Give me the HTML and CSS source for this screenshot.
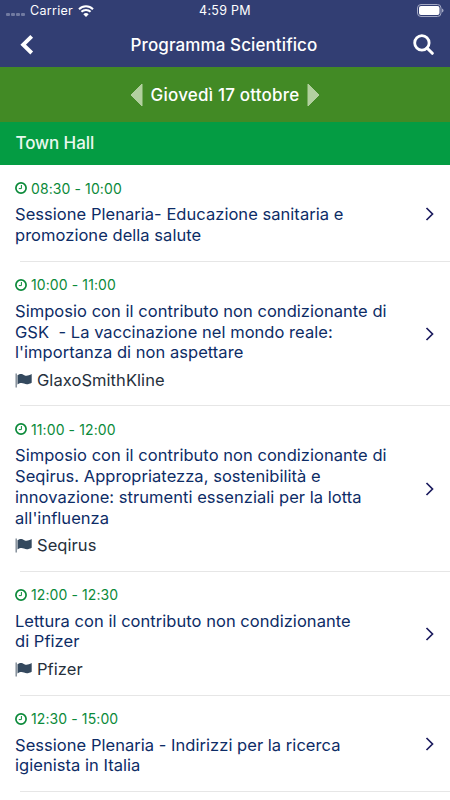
FILE: index.html
```html
<!DOCTYPE html>
<html lang="it">
  <head>
    <meta charset="UTF-8" />
    <meta name="viewport" content="width=device-width, initial-scale=1.0" />
    <title>Programma Scientifico</title>
    <link rel="stylesheet" href="styles.css">
  </head>
  <body>
    <!-- Shared icons -->
    <svg class="icon-defs" width="0" height="0">
      <symbol id="clock" viewBox="0 0 12 12">
        <circle cx="6" cy="6" r="5.1" fill="none" stroke="currentColor" stroke-width="1.7" />
        <path d="M6.400 3v3.600H3.800" fill="none" stroke="currentColor" stroke-width="1" />
      </symbol>
      <symbol id="flag" viewBox="0 0 17 15">
        <path d="M1.200.4v14.200" stroke="#7d8894" stroke-width="1.400" />
        <path d="M2.500 2.200C5.500.3 7 1 9.300 2.200c2.200 1.100 4.300.4 7.400-1.100v8.700c-3 1.600-5.300 2-7.700.8-2.200-1.100-4-.8-6.500.8z" fill="#34495e" />
      </symbol>
      <symbol id="chevron" viewBox="0 0 10 14">
        <path d="M1.500 1l6 6-6 6" fill="none" stroke="currentColor" stroke-width="1.700" />
      </symbol>
    </svg>

    <header class="header">
      <div class="status-bar">
        <div class="status-left">
          <span class="signal"><i></i><i></i><i></i><i></i></span>
          <span class="carrier">Carrier</span>
          <svg class="wifi" width="16" height="12" viewBox="0 0 16 12">
            <path d="M1 4.200a10 10 0 0 1 14 0M3.400 6.800a6.600 6.600 0 0 1 9.200 0" fill="none" stroke="#fff" stroke-width="2" />
            <path d="M8 12L5.300 9.200a3.900 3.900 0 0 1 5.400 0z" fill="#fff" />
          </svg>
        </div>
        <span class="clock">4:59 PM</span>
        <svg class="battery" width="27" height="13" viewBox="0 0 27 13">
          <rect x=".5" y=".5" width="23.500" height="12" rx="3.500" fill="none" stroke="#a4a9c4" />
          <rect x="2" y="2" width="20.500" height="9" rx="2" fill="#fff" />
          <path d="M25 4.500q1.500.5 1.500 2t-1.500 2z" fill="#a4a9c4" />
        </svg>
      </div>
      <div class="nav-bar">
        <svg class="back" width="14" height="20" viewBox="0 0 14 20">
          <path d="M11.700 1.400L3.200 9.700l8.500 8.300" fill="none" stroke="#fff" stroke-width="3.900" />
        </svg>
        <h1 class="nav-title">Programma Scientifico</h1>
        <svg class="search" width="21" height="21" viewBox="0 0 21 21">
          <circle cx="8.900" cy="8.900" r="7.200" fill="none" stroke="#fff" stroke-width="2.800" />
          <path d="M14 14l5.300 5.300" stroke="#fff" stroke-width="3" stroke-linecap="round" />
        </svg>
      </div>
    </header>

    <div class="day-bar">
      <svg width="13" height="24" viewBox="0 0 13 24"><path d="M12 1v22L1 12z" fill="#b2d09f" stroke="#b2d09f" stroke-linejoin="round" /></svg>
      <span class="day">Giovedì 17 ottobre</span>
      <svg width="13" height="24" viewBox="0 0 13 24"><path d="M1 1v22l11-11z" fill="#b2d09f" stroke="#b2d09f" stroke-linejoin="round" /></svg>
    </div>

    <h2 class="room">Town Hall</h2>

    <ul class="sessions">
      <li class="session">
        <div class="info">
          <div class="time"><svg><use href="#clock" /></svg>08:30 - 10:00</div>
          <div class="title">Sessione Plenaria- Educazione sanitaria e<br>promozione della salute</div>
        </div>
        <svg class="chevron"><use href="#chevron" /></svg>
      </li>
      <li class="session">
        <div class="info">
          <div class="time"><svg><use href="#clock" /></svg>10:00 - 11:00</div>
          <div class="title">Simposio con il contributo non condizionante di<br>GSK&nbsp; - La vaccinazione nel mondo reale:<br>l'importanza di non aspettare</div>
          <div class="sponsor"><svg><use href="#flag" /></svg>GlaxoSmithKline</div>
        </div>
        <svg class="chevron"><use href="#chevron" /></svg>
      </li>
      <li class="session">
        <div class="info">
          <div class="time"><svg><use href="#clock" /></svg>11:00 - 12:00</div>
          <div class="title">Simposio con il contributo non condizionante di<br>Seqirus. Appropriatezza, sostenibilità e<br>innovazione: strumenti essenziali per la lotta<br>all'influenza</div>
          <div class="sponsor"><svg><use href="#flag" /></svg>Seqirus</div>
        </div>
        <svg class="chevron"><use href="#chevron" /></svg>
      </li>
      <li class="session">
        <div class="info">
          <div class="time"><svg><use href="#clock" /></svg>12:00 - 12:30</div>
          <div class="title">Lettura con il contributo non condizionante<br>di Pfizer</div>
          <div class="sponsor"><svg><use href="#flag" /></svg>Pfizer</div>
        </div>
        <svg class="chevron"><use href="#chevron" /></svg>
      </li>
      <li class="session">
        <div class="info">
          <div class="time"><svg><use href="#clock" /></svg>12:30 - 15:00</div>
          <div class="title">Sessione Plenaria - Indirizzi per la ricerca<br>igienista in Italia</div>
        </div>
        <svg class="chevron"><use href="#chevron" /></svg>
      </li>
    </ul>
  </body>
</html>
```
FILE: styles.css
```css
* {
  box-sizing: border-box;
}

body {
  margin: 0;
  height: 800px;
  overflow: hidden;
  background-color: #fff;
  font-family: Inter, "Liberation Sans", sans-serif;
  color: #0d2c66;
}

.icon-defs {
  display: block;
}

/* Header */
.header {
  height: 67px;
  background-color: #323e73;
  color: #fff;
}

.status-bar {
  display: grid;
  grid-template-columns: 1fr auto 1fr;
  align-items: center;
  height: 21px;
  padding: 0 6px 0 6px;
  font-size: 12.5px;
  letter-spacing: 0.3px;
}

.status-left {
  display: flex;
  align-items: center;
}

.signal {
  display: flex;
  gap: 1px;
  margin: 7px 5px 0 0;
}

.signal i {
  width: 4px;
  height: 3px;
  border-radius: 1px;
  background-color: #717aa0;
}

.wifi {
  margin-left: 5px;
}

.battery {
  justify-self: end;
}

.nav-bar {
  display: flex;
  align-items: center;
  justify-content: space-between;
  height: 46px;
  padding: 1px 16px 0 20px;
}

.nav-title {
  margin: 0;
  padding-left: 1px;
  font-size: 17px;
  font-weight: 500;
  letter-spacing: 0.1px;
}

/* Day selector */
.day-bar {
  display: flex;
  align-items: center;
  justify-content: center;
  gap: 8px;
  height: 55px;
  background-color: #428a25;
  color: #fff;
  font-size: 17px;
  font-weight: 500;
  letter-spacing: 0.2px;
}

.room {
  margin: 0;
  height: 43px;
  padding-left: 15.5px;
  background-color: #049c43;
  color: #e9f8ee;
  font-size: 17px;
  font-weight: 500;
  letter-spacing: -0.1px;
  line-height: 43px;
}

/* Sessions */
.sessions {
  margin: 0;
  padding: 0.4px 0 0;
  list-style: none;
}

.session {
  display: flex;
  align-items: center;
  justify-content: space-between;
  padding: 13px 15px 16px;
  background: linear-gradient(#e6e6e6, #e6e6e6) 20px 100% / 100% 1px no-repeat;
}

.time {
  display: flex;
  align-items: center;
  gap: 4px;
  height: 20px;
  margin-bottom: 6px;
  color: #0b8a3a;
  font-size: 14px;
  letter-spacing: 0.1px;
}

.time svg {
  width: 12px;
  height: 12px;
}

.title {
  font-size: 16.5px;
  letter-spacing: 0.04px;
  line-height: 20.7px;
  white-space: nowrap;
}

.sponsor {
  display: flex;
  align-items: center;
  gap: 5px;
  margin-top: 6.8px;
  color: #26303c;
  font-size: 16.5px;
  letter-spacing: 0.06px;
  line-height: 20.7px;
}

.sponsor svg {
  width: 17px;
  height: 15px;
}

.chevron {
  width: 10px;
  height: 14px;
  margin-top: 3px;
  color: #1b1b5e;
}
```
